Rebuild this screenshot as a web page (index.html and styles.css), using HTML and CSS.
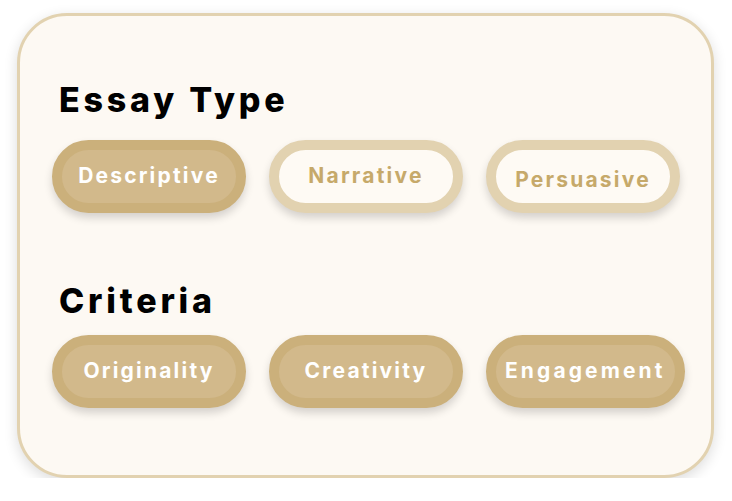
FILE: index.html
```html
<!DOCTYPE html>
<html>
<head>
<meta charset="utf-8">
<link rel="stylesheet" href="styles.css">
</head>
<body>
<div class="card">
  <h2 class="title">Essay Type</h2>
  <div class="chips">
    <span class="chip on">Descriptive</span>
    <span class="chip off">Narrative</span>
    <span class="chip off low">Persuasive</span>
  </div>
  <h2 class="title second">Criteria</h2>
  <div class="chips">
    <span class="chip on">Originality</span>
    <span class="chip on">Creativity</span>
    <span class="chip on wide">Engagement</span>
  </div>
</div>
</body>
</html>
```
FILE: styles.css
```css
html, body {
  margin: 0;
  padding: 0;
  background: #ffffff;
}
body {
  font-family: Inter, "Liberation Sans", sans-serif;
}
.card {
  box-sizing: border-box;
  margin: 13px 0 0 17px;
  width: 697px;
  height: 465px;
  border: 3px solid #e2d2b0;
  border-radius: 50px;
  background: #fdf9f3;
  box-shadow: 0 4px 14px rgba(0, 0, 0, 0.14);
  padding: 64px 32px 0 32px;
}
.title {
  margin: 0;
  padding-left: 7px;
  font-size: 34px;
  line-height: 40px;
  font-weight: 800;
  color: #000;
  letter-spacing: 3.8px;
}
.title.second {
  margin-top: 68px;
}
.chips {
  display: flex;
  gap: 23px;
  margin-top: 20px;
}
.title.second + .chips {
  margin-top: 14px;
}
.chip {
  box-sizing: border-box;
  flex-shrink: 0;
  min-width: 194px;
  height: 73px;
  padding: 0 9px 2px;
  border: 10px solid;
  border-radius: 37px;
  display: flex;
  align-items: center;
  justify-content: center;
  font-size: 21px;
  font-weight: 700;
  letter-spacing: 2.2px;
  box-shadow: 0 5px 9px rgba(0, 0, 0, 0.16);
}
.chip.wide {
  letter-spacing: 3.1px;
}
.chip.on {
  background: #d2b98b;
  border-color: #cbb07b;
  color: #ffffff;
}
.chip.off {
  background: #fefaf4;
  border-color: #e2d2b0;
  color: #c6a96a;
}
.chip.low {
  padding-top: 8px;
}
```
